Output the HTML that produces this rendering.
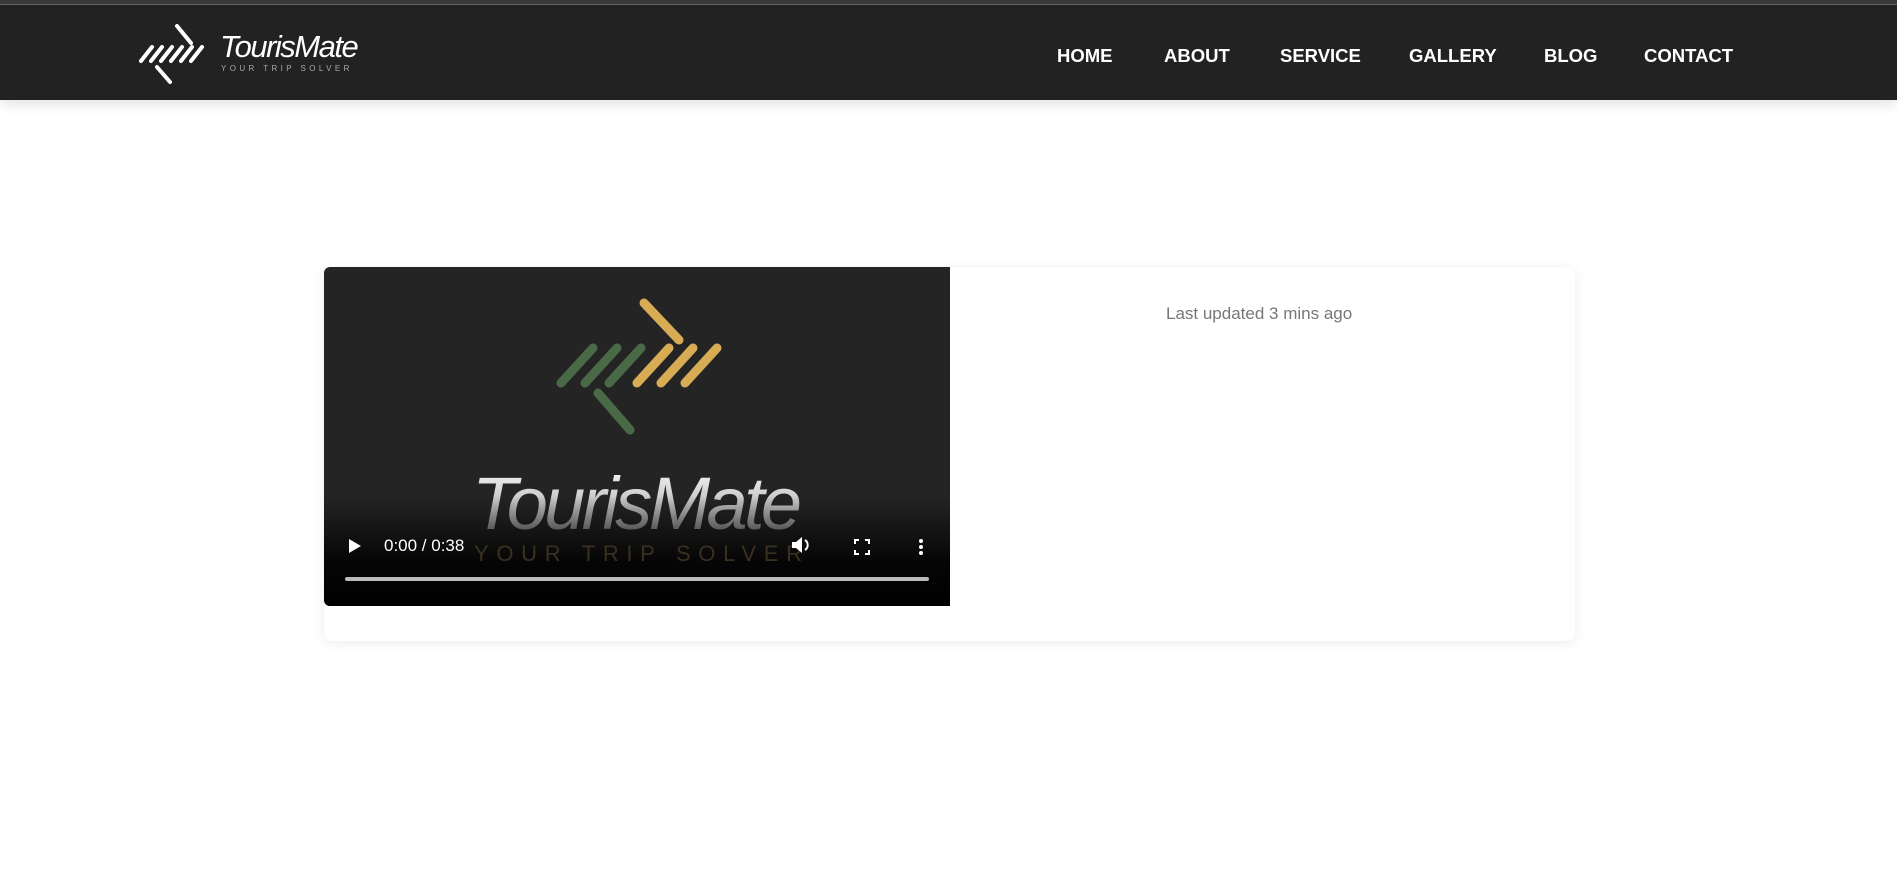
<!DOCTYPE html>
<html><head><meta charset="utf-8"><style>
*{margin:0;padding:0;box-sizing:border-box}
body{width:1897px;height:881px;background:#fff;font-family:"Liberation Sans",Arial,sans-serif;position:relative;overflow:hidden}
.top{position:absolute;left:0;top:0;width:1897px;height:5px;background:#3a3a3a;border-bottom:1px solid #666}
.hdr{position:absolute;left:0;top:5px;width:1897px;height:95px;background:#222;box-shadow:0 4px 12px rgba(0,0,0,.12)}
.nav{position:absolute;top:40px;font-weight:bold;color:#fff;font-size:18.5px}
.card{position:absolute;left:324px;top:267px;width:1251px;height:374px;background:#fff;border-radius:8px;box-shadow:0 2px 12px rgba(0,0,0,.08)}
.vid{position:absolute;left:324px;top:267px;width:626px;height:339px;background:#242424;border-radius:6px 0 0 6px;overflow:hidden}
.grad{position:absolute;left:0;bottom:0;width:100%;height:110px;background:linear-gradient(rgba(0,0,0,0),rgba(0,0,0,.85) 60%,#000)}
</style></head><body>
<div class="top"></div>
<div class="hdr">
<svg style="position:absolute;left:135px;top:18px" width="80" height="62" viewBox="0 0 80 62" stroke="#fff" stroke-width="4" stroke-linecap="round" fill="none">
<line x1="42" y1="3" x2="56" y2="20"/>
<line x1="6" y1="38" x2="17" y2="24"/><line x1="16" y1="38" x2="27" y2="24"/><line x1="26" y1="38" x2="37" y2="24"/><line x1="36" y1="38" x2="47" y2="24"/><line x1="46" y1="38" x2="57" y2="24"/><line x1="56" y1="38" x2="67" y2="24"/>
<line x1="22" y1="44" x2="35" y2="59"/>
</svg>
<div style="position:absolute;left:220px;top:24px;color:#fff;font-size:31px;font-style:italic;letter-spacing:-1.5px">TourisMate</div>
<div style="position:absolute;left:221px;top:59px;color:#aaa;font-size:8px;letter-spacing:3.4px">YOUR TRIP SOLVER</div>
<div class="nav" style="left:1057px">HOME</div>
<div class="nav" style="left:1164px">ABOUT</div>
<div class="nav" style="left:1280px">SERVICE</div>
<div class="nav" style="left:1409px">GALLERY</div>
<div class="nav" style="left:1544px">BLOG</div>
<div class="nav" style="left:1644px">CONTACT</div>
</div>
<div class="card"><div style="position:absolute;left:842px;top:37px;color:#777;font-size:17px">Last updated 3 mins ago</div></div>
<div class="vid">
<svg style="position:absolute;left:0;top:0" width="626" height="339" stroke-width="9" stroke-linecap="round" fill="none">
<g stroke="#d8ab55"><line x1="320" y1="36" x2="355" y2="73"/><line x1="313" y1="116" x2="345" y2="81"/><line x1="337" y1="116" x2="369" y2="81"/><line x1="361" y1="116" x2="393" y2="81"/></g>
<g stroke="#4a6a47"><line x1="237" y1="116" x2="269" y2="81"/><line x1="261" y1="116" x2="293" y2="81"/><line x1="285" y1="116" x2="317" y2="81"/><line x1="274" y1="126" x2="306" y2="163"/></g>
<defs><linearGradient id="g" x1="0" y1="0" x2="0" y2="1"><stop offset="0" stop-color="#fff"/><stop offset="1" stop-color="#888"/></linearGradient></defs>
<text x="148" y="262" font-family="Liberation Sans,sans-serif" font-size="74" font-style="italic" fill="url(#g)" stroke="none" letter-spacing="-3" textLength="327">TourisMate</text>
</svg>
<div class="grad"></div>
<svg style="position:absolute;left:0;top:0" width="626" height="339"><text x="150" y="294" font-family="Liberation Sans,sans-serif" font-size="22" fill="#3a3020" textLength="328">YOUR TRIP SOLVER</text></svg>
<svg style="position:absolute;left:24px;top:271px" width="14" height="16"><path d="M1 1L13 8L1 15Z" fill="#fff"/></svg>
<div style="position:absolute;left:60px;top:269px;color:#fff;font-size:17px">0:00 / 0:38</div>
<svg style="position:absolute;left:467px;top:268px" width="22" height="20" fill="#fff"><path d="M1 7h4l6-5v16l-6-5H1z"/><path d="M14 5a6 6 0 0 1 0 10" stroke="#fff" stroke-width="2" fill="none"/></svg>
<svg style="position:absolute;left:530px;top:272px" width="16" height="16" stroke="#fff" stroke-width="2" fill="none"><path d="M1 5V1h4M11 1h4v4M15 11v4h-4M5 15H1v-4"/></svg>
<svg style="position:absolute;left:594px;top:271px" width="6" height="18" fill="#fff"><circle cx="3" cy="3" r="2"/><circle cx="3" cy="9" r="2"/><circle cx="3" cy="15" r="2"/></svg>
<div style="position:absolute;left:21px;top:310px;width:584px;height:4px;border-radius:2px;background:#bbb"></div>
</div>
</body></html>
